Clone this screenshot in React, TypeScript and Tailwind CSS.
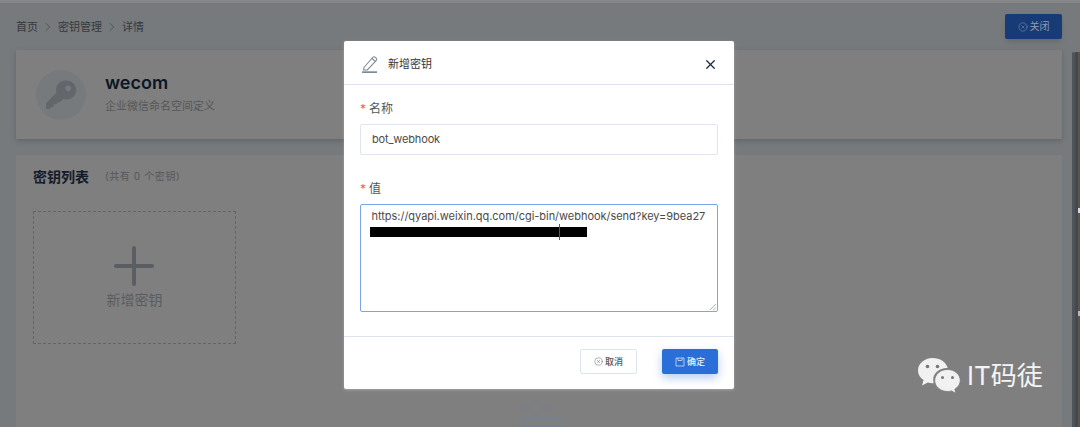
import { ChevronRight, Plus, X, CircleX } from "lucide-react";

const font = "font-['Inter','Noto_Sans_CJK_SC',sans-serif]";

function KeyIcon() {
  return (
    <svg viewBox="0 0 32 32" className="h-[32px] w-[32px]" fill="#63676b">
      <path d="M20.5 1.5a9.5 9.5 0 0 0-9.1 12.2L1 24.2V30h3.6l1.9-2h2.2v-2.8h2.6l1.8-2.2h2.2l3.1-3.2A9.5 9.5 0 1 0 20.5 1.5zm2.7 5a2.8 2.8 0 1 1 0 5.6 2.8 2.8 0 0 1 0-5.6z" fillRule="evenodd" />
    </svg>
  );
}

function PenIcon() {
  return (
    <svg viewBox="0 0 18 18" className="h-[18px] w-[18px]" fill="none" stroke="#7f8896" strokeWidth="1.1">
      <path d="M3 12.5 11.6 2.500a2 2 0 0 1 2.800-.2l.6.5a2 2 0 0 1 .1 2.800L6.300 15H2.600z" />
      <path d="m11 3.500 3.600 3.200" />
      <path d="M1 17.200h15" strokeWidth="1.800" />
    </svg>
  );
}

function DiskIcon() {
  return (
    <svg viewBox="0 0 10 10" className="h-[10px] w-[10px]" fill="none" stroke="#cfdef7" strokeWidth="0.8">
      <path d="M1 1h8v8H1z" />
      <path d="M3 1v2.500h4V1" />
    </svg>
  );
}

function WechatLogo() {
  return (
    <svg viewBox="0 0 44 38" className="h-[38px] w-[44px]">
      <path d="M15.500 1C7.500 1 1 6.600 1 13.400c0 4 2.200 7.400 5.600 9.700L5 28.500l5.800-3c1.500.4 3 .7 4.700.7h1.200a12 12 0 0 1-.5-3.400c0-6.500 6-11.700 13.700-11.700h.8C29.300 5.100 23 1 15.500 1z" fill="#f1f1f1" />
      <circle cx="10.500" cy="9.500" r="1.800" fill="#777" />
      <circle cx="20.500" cy="9.500" r="1.800" fill="#777" />
      <path d="M30.500 12.500c-7 0-12.800 4.900-12.800 11s5.800 11 12.800 11c1.400 0 2.700-.2 4-.6l4.500 2.600-1.200-4.300c3.300-2 5.500-5.200 5.500-8.700 0-6.100-5.800-11-12.800-11z" fill="#f1f1f1" stroke="#777" strokeWidth="0.800" />
      <circle cx="25.500" cy="20.500" r="1.500" fill="#777" />
      <circle cx="35.500" cy="20.500" r="1.500" fill="#777" />
    </svg>
  );
}

function Label({ text }: { text: string }) {
  return (
    <div className="flex h-[16px] items-center text-[12px] text-[#555]">
      <span className="mr-[3px] text-[#ef5b5b]">*</span>
      {text}
    </div>
  );
}

export default function App() {
  return (
    <div className={`${font} relative h-[427px] w-[1080px] overflow-hidden bg-[#777a7d]`}>
      {/* page behind the dialog */}
      <div className="h-[3px] bg-[#848688]" />
      <div className="flex flex-col pl-[16px] pr-[18px]">
        <div className="flex h-[47px] items-center justify-between">
          <div className="flex items-center pt-[1px] text-[11px] text-[#36393c]">
            首页
            <ChevronRight size={14} strokeWidth={1.2} className="mx-[3px] text-[#45484b]" />
            密钥管理
            <ChevronRight size={14} strokeWidth={1.2} className="mx-[3px] text-[#45484b]" />
            详情
          </div>
          <div className="flex h-[25px] w-[57px] items-center justify-center gap-[2px] rounded-[2px] bg-[#173b76] text-[10px] text-[#8d9cb4] shadow-md">
            <CircleX size={10} strokeWidth={1.2} />
            关闭
          </div>
        </div>
        <div className="flex h-[89px] items-center gap-[19px] bg-[#7f7f7f] pl-[20px] shadow-[0_2px_5px_rgba(50,55,65,0.3)]">
          <div className="flex h-[50px] w-[50px] items-center justify-center rounded-full bg-[#777a7d]">
            <KeyIcon />
          </div>
          <div className="-mt-[4px] flex flex-col">
            <div className="text-[18px] leading-[24px] font-semibold text-[#0d1526]">wecom</div>
            <div className="mt-[3px] text-[11px] leading-[16px] text-[#54575a]">企业微信命名空间定义</div>
          </div>
        </div>
        <div className="mt-[16px] h-[272px] bg-[#7f7f7f] pl-[17px] pt-[10px]">
          <div className="flex h-[22px] items-center">
            <span className="text-[14px] font-semibold text-[#141b2b]">密钥列表</span>
            <span className="ml-[16px] text-[10px] tracking-[0.6px] text-[#55585b]">(共有 0 个密钥)</span>
          </div>
          <div className="mt-[24px] flex h-[133px] w-[203px] flex-col items-center rounded-[1px] border border-dashed border-[#626466] pt-[23px] pr-[2px]">
            <Plus size={62} strokeWidth={1.5} className="text-[#5a5e63]" />
            <div className="-mt-[7px] pl-[2px] text-[14px] leading-[20px] text-[#5a5d60]">新增密钥</div>
          </div>
        </div>
      </div>

      {/* scrollbar strip */}
      <div className="absolute top-[52px] right-[5px] bottom-0 w-[3px] rounded-t-[2px] bg-[#4f535b]" />
      <div className="absolute top-[52px] right-[2px] bottom-0 w-[3px] bg-[#45484e]" />
      <div className="absolute top-[52px] right-0 bottom-0 w-[2px] bg-[#5f5448]" />
      <div className="absolute top-[208px] right-0 h-[5px] w-[2px] bg-[#d8d8d8]" />
      <div className="absolute top-[311px] right-0 h-[5px] w-[2px] bg-[#b8b8b8]" />

      {/* dialog */}
      <div className="absolute top-[41px] left-[344px] flex h-[348px] w-[390px] flex-col rounded-[2px] bg-white shadow-[0_1px_3px_rgba(255,255,255,0.3)]">
        <div className="flex h-[44px] shrink-0 items-center justify-between border-b border-[#dde4f0] pt-[3px] pr-[16px] pl-[17px]">
          <div className="flex items-center gap-[9px] text-[11px] text-[#333]">
            <PenIcon />
            新增密钥
          </div>
          <X size={15} strokeWidth={2} className="text-[#1a2740]" />
        </div>
        <div className="flex flex-1 flex-col px-[16px] pt-[16px]">
          <Label text="名称" />
          <div className="mt-[7px] flex h-[31px] items-center rounded-[2px] border border-[#dfe6f2] pl-[11px] text-[11px] tracking-[-0.15px] text-[#4a4a4a]">
            bot_webhook
          </div>
          <div className="mt-[26px]">
            <Label text="值" />
          </div>
          <div className="relative mt-[7px] h-[108px] rounded-[2px] border border-[#7aa5e8] pt-[3px] pl-[10.500px] text-[11px] leading-[17px] tracking-[-0.03px] text-[#4a4a4a]">
            https://qyapi.weixin.qq.com/cgi-bin/webhook/send?key=9bea27
            <div className="relative mt-[2px] -ml-[2px] h-[10px] w-[217px] bg-black">
              <div className="absolute -top-[3px] left-[189px] h-[16px] w-[1px] bg-[#555]" />
            </div>
            <svg viewBox="0 0 8 8" className="absolute right-[1px] bottom-[1px] h-[7px] w-[7px]" stroke="#888" strokeWidth="0.8">
              <path d="M1 8 8 1M5 8l3-3" />
            </svg>
          </div>
        </div>
        <div className="flex h-[53px] shrink-0 justify-end gap-[25px] border-t border-[#dde4f0] pt-[12px] pr-[16px]">
          <div className="flex h-[25px] w-[57px] items-center justify-center gap-[2px] rounded-[2px] border border-[#dde4f0] text-[9px] font-medium text-[#555]">
            <CircleX size={9} strokeWidth={1.2} />
            取消
          </div>
          <div className="flex h-[25px] w-[56px] items-center justify-center gap-[2px] rounded-[2px] bg-[#2a6fd8] text-[9px] font-medium text-[#e3edfb] shadow-[0_4px_10px_rgba(42,111,216,0.35)]">
            <DiskIcon />
            确定
          </div>
        </div>
      </div>

      {/* content peeking out under the dialog */}
      <div className="absolute top-[406px] left-[518px] h-[4px] w-[13px] bg-[#7b7e82]" />
      <div className="absolute top-[406px] left-[540px] h-[4px] w-[13px] bg-[#7b7e82]" />
      <div className="absolute top-[417px] left-[520px] h-[4px] w-[41px] bg-[#78808a]" />
      <div className="absolute top-[425px] left-[516px] h-[2px] w-[50px] bg-[#74808e]" />

      {/* account watermark */}
      <div className="absolute top-[357px] left-[917px] flex items-center gap-[6px] text-[26px] leading-[38px] text-[#f4f4f4]">
        <WechatLogo />
        IT码徒
      </div>
    </div>
  );
}
